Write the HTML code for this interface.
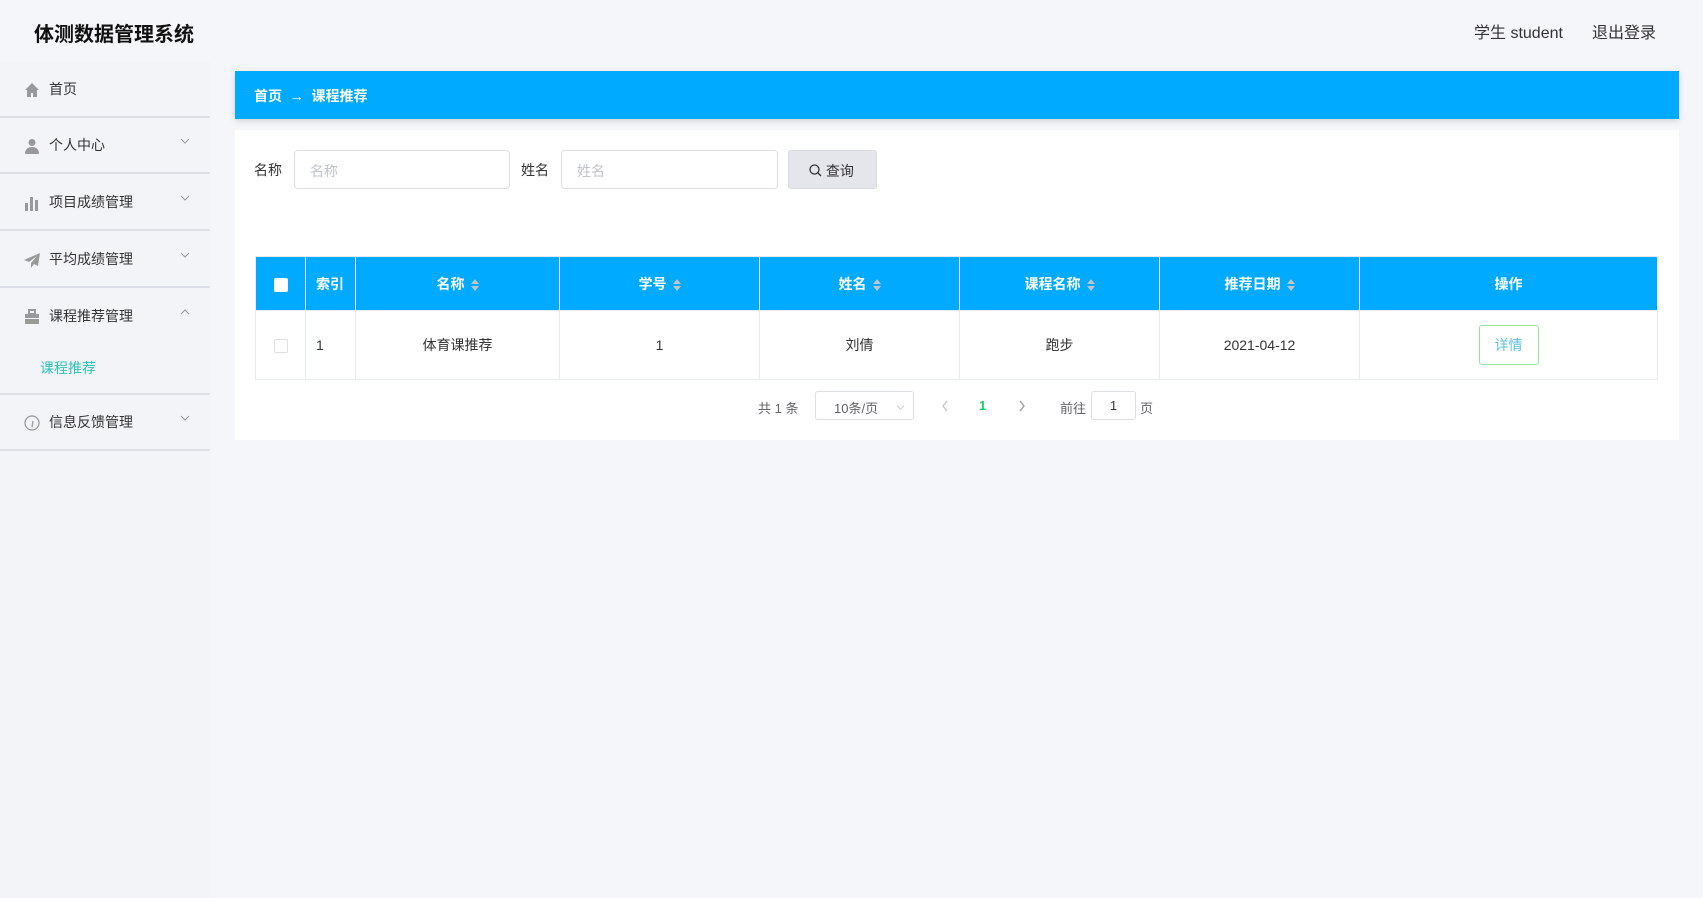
<!DOCTYPE html>
<html><head><meta charset="utf-8"><style>
*{box-sizing:border-box;margin:0;padding:0}
body{width:1703px;height:898px;background:#f5f6f9;font-family:"Liberation Sans","Noto Sans CJK SC",sans-serif;position:relative;overflow:hidden;color:#333}
.abs{position:absolute}
.title{left:34px;top:18px;font-size:20px;font-weight:bold;color:#111}
.hr{top:19px;font-size:16px;color:#333}
.side{left:0;top:61px;width:210px;height:837px;background:#f3f4f7}
.item{position:absolute;left:0;width:210px;height:57px;border-bottom:2px solid #dcdfe6;font-size:14px;color:#333}
.item .ic{position:absolute;left:24px;top:21px;width:16px;height:16px}
.item .tx{position:absolute;left:49px;top:18px}
.item .ch{position:absolute;left:180px;top:19px;width:10px;height:10px}
.bc{left:235px;top:71px;width:1444px;height:48px;background:#00aaff;box-shadow:0 2px 6px rgba(0,0,0,.15);color:#fff;font-size:14px;font-weight:bold;padding:15px 0 0 19px}
.panel{left:235px;top:130px;width:1444px;height:310px;background:#fff}
.lbl{font-size:14px;color:#333}
.inp{border:1px solid #dcdfe6;border-radius:4px;background:#fff;font-size:14px;color:#c0c4cc;padding:10px 0 0 15px}
table{position:absolute;left:255px;top:256px;width:1403px;border-collapse:collapse;font-size:14px}
th{background:#00aaff;color:#fff;height:54px;border:1px solid #e6ebf2;font-weight:bold}
td{height:69px;border:1px solid #e6ebf2;text-align:center;color:#333}
.sort{display:inline-block;vertical-align:middle;margin-left:6px;width:8px}
.sort i{display:block;width:0;height:0;border-left:4px solid transparent;border-right:4px solid transparent}
</style></head><body>
<div class="abs title">体测数据管理系统</div>
<div class="abs hr" style="left:1474px">学生 student</div>
<div class="abs hr" style="left:1592px">退出登录</div>
<div class="abs side">
 <div class="item" style="top:0">
  <svg class="ic" viewBox="0 0 16 16"><path d="M8 1L1 8h2v7h4v-4h2v4h4V8h2z" fill="#999"/></svg><span class="tx">首页</span></div>
 <div class="item" style="top:56px">
  <svg class="ic" viewBox="0 0 16 16"><circle cx="8" cy="4.5" r="3.5" fill="#999"/><path d="M1 16c0-5 3-7 7-7s7 2 7 7z" fill="#999"/></svg><span class="tx">个人中心</span><svg class="ch" viewBox="0 0 10 10"><path d="M1 3l4 4 4-4" fill="none" stroke="#999"/></svg></div>
 <div class="item" style="top:113px">
  <svg class="ic" viewBox="0 0 16 16"><rect x="1" y="8" width="3" height="8" fill="#999"/><rect x="6" y="2" width="3" height="14" fill="#999"/><rect x="11" y="5" width="3" height="11" fill="#999"/></svg><span class="tx">项目成绩管理</span><svg class="ch" viewBox="0 0 10 10"><path d="M1 3l4 4 4-4" fill="none" stroke="#999"/></svg></div>
 <div class="item" style="top:170px">
  <svg class="ic" viewBox="0 0 16 16"><path d="M16 1L0 8l5 2 8-6-6 7v5l3-4 4 2z" fill="#999"/></svg><span class="tx">平均成绩管理</span><svg class="ch" viewBox="0 0 10 10"><path d="M1 3l4 4 4-4" fill="none" stroke="#999"/></svg></div>
 <div class="item" style="top:227px;height:107px">
  <svg class="ic" viewBox="0 0 16 16"><rect x="5" y="1" width="6" height="4" fill="none" stroke="#999" stroke-width="2"/><rect x="1" y="5" width="14" height="4" fill="#999"/><rect x="1" y="10" width="14" height="5" fill="#999"/></svg><span class="tx">课程推荐管理</span><svg class="ch" viewBox="0 0 10 10"><path d="M1 7l4-4 4 4" fill="none" stroke="#999"/></svg>
  <span style="position:absolute;left:40px;top:70px;color:#2ec4b6">课程推荐</span></div>
 <div class="item" style="top:333px">
  <svg class="ic" viewBox="0 0 16 16"><circle cx="8" cy="8" r="7" fill="none" stroke="#999" stroke-width="1.3"/><path d="M8 12l1-6" stroke="#999" stroke-width="1.3"/></svg><span class="tx">信息反馈管理</span><svg class="ch" viewBox="0 0 10 10"><path d="M1 3l4 4 4-4" fill="none" stroke="#999"/></svg></div>
</div>
<div class="abs bc">首页 &nbsp;→&nbsp; 课程推荐</div>
<div class="abs panel"></div>
<div class="abs lbl" style="left:254px;top:160px">名称</div>
<div class="abs inp" style="left:294px;top:150px;width:216px;height:39px">名称</div>
<div class="abs lbl" style="left:521px;top:160px">姓名</div>
<div class="abs inp" style="left:561px;top:150px;width:217px;height:39px">姓名</div>
<div class="abs" style="left:788px;top:150px;width:89px;height:39px;background:#e4e6eb;border:1px solid #d8dbe0;border-radius:3px;font-size:14px;padding:10px 0 0 20px">
<svg width="13" height="13" viewBox="0 0 13 13" style="vertical-align:-1px"><circle cx="5.5" cy="5.5" r="4.5" fill="none" stroke="#333" stroke-width="1.3"/><path d="M9 9l3 3" stroke="#333" stroke-width="1.3"/></svg> 查询</div>
<table>
<tr>
<th style="width:50px"><span style="display:inline-block;width:14px;height:14px;background:#fff;border-radius:2px;vertical-align:middle"></span></th>
<th style="width:50px;text-align:left;padding-left:10px">索引</th>
<th style="width:204px">名称<span class="sort"><i style="border-bottom:5px solid #c0c4cc;margin-bottom:2px"></i><i style="border-top:5px solid #c0c4cc"></i></span></th>
<th style="width:200px">学号<span class="sort"><i style="border-bottom:5px solid #c0c4cc;margin-bottom:2px"></i><i style="border-top:5px solid #c0c4cc"></i></span></th>
<th style="width:200px">姓名<span class="sort"><i style="border-bottom:5px solid #c0c4cc;margin-bottom:2px"></i><i style="border-top:5px solid #c0c4cc"></i></span></th>
<th style="width:200px">课程名称<span class="sort"><i style="border-bottom:5px solid #c0c4cc;margin-bottom:2px"></i><i style="border-top:5px solid #c0c4cc"></i></span></th>
<th style="width:200px">推荐日期<span class="sort"><i style="border-bottom:5px solid #c0c4cc;margin-bottom:2px"></i><i style="border-top:5px solid #c0c4cc"></i></span></th>
<th>操作</th>
</tr>
<tr>
<td><span style="display:inline-block;width:14px;height:14px;border:1px solid #dcdfe6;border-radius:2px;vertical-align:middle"></span></td>
<td style="text-align:left;padding-left:10px">1</td>
<td>体育课推荐</td><td>1</td><td>刘倩</td><td>跑步</td><td>2021-04-12</td>
<td><span style="display:inline-block;width:60px;height:40px;border:1px solid #98e39a;border-radius:3px;color:#5bc0de;line-height:38px">详情</span></td>
</tr>
</table>
<div class="abs" style="left:758px;top:398px;font-size:13px;color:#606266">共 1 条</div>
<div class="abs" style="left:815px;top:391px;width:99px;height:29px;border:1px solid #dcdfe6;border-radius:3px;font-size:13px;color:#606266;padding:6px 0 0 18px">10条/页<svg style="position:absolute;right:8px;top:11px" width="9" height="9" viewBox="0 0 10 10"><path d="M1 3l4 4 4-4" fill="none" stroke="#c0c4cc"/></svg></div>
<svg class="abs" style="left:941px;top:400px" width="8" height="12" viewBox="0 0 8 12"><path d="M6 1L2 6l4 5" fill="none" stroke="#c0c4cc" stroke-width="1.3"/></svg>
<div class="abs" style="left:979px;top:398px;font-size:13px;color:#13ce66;font-weight:bold">1</div>
<svg class="abs" style="left:1018px;top:400px" width="8" height="12" viewBox="0 0 8 12"><path d="M2 1l4 5-4 5" fill="none" stroke="#999" stroke-width="1.3"/></svg>
<div class="abs" style="left:1060px;top:398px;font-size:13px;color:#606266">前往</div>
<div class="abs" style="left:1091px;top:391px;width:45px;height:29px;border:1px solid #dcdfe6;border-radius:3px;font-size:13px;text-align:center;padding-top:6px">1</div>
<div class="abs" style="left:1140px;top:398px;font-size:13px;color:#606266">页</div>
</body></html>
